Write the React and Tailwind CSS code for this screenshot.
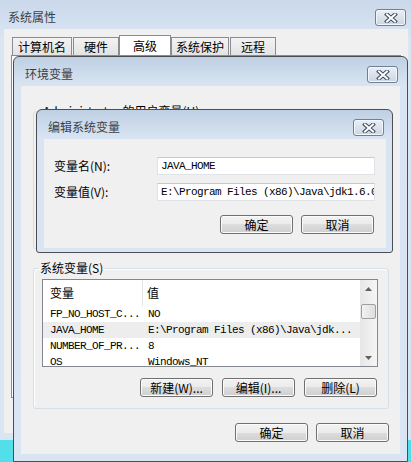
import React from "react";

const cjk = "font-['Noto_Sans_CJK_SC',sans-serif]";
const mono = "font-['Liberation_Mono','Noto_Sans_CJK_SC',monospace] text-[11px] tracking-[-0.6px]";

const CloseBtn = () => (
    <div className="mr-[2px] mt-[9px] flex h-[17px] w-[31px] items-center justify-center self-start rounded-[3px] border border-[#6e7f96] bg-[linear-gradient(#e9eff6,#cbd6e3)] shadow-[inset_0_0_0_1px_#f3f6fa]">
        <svg width="14" height="10" viewBox="0 0 14 10">
            <path d="M3 1.5 L11 8.5 M11 1.5 L3 8.5" stroke="#3d4b5e" strokeWidth="4" strokeLinecap="square" />
            <path d="M3 1.5 L11 8.5 M11 1.5 L3 8.5" stroke="#ffffff" strokeWidth="2" strokeLinecap="square" />
        </svg>
    </div>
);

const Title = ({ children }) => (
    <span className="mt-[8px] self-start pl-[4px] text-[12px] leading-[18px] text-[#3a3f47]">{children}</span>
);

const Btn = ({ children }) => (
    <div className="flex h-[19px] w-[73px] items-center justify-center rounded-[3px] border border-[#707070] bg-[linear-gradient(#f2f2f2_0%,#ebebeb_50%,#dddddd_50%,#cfcfcf_100%)] text-[12px] leading-none text-black shadow-[inset_0_0_0_1px_#fbfbfb]">
        {children}
    </div>
);

const Input = ({ value }) => (
    <div className={"h-[18px] w-[218px] overflow-hidden whitespace-nowrap border border-[#dfe3e8] border-t-[#c6cad0] bg-white pl-[3px] leading-[16px] text-black " + mono}>
        {value}
    </div>
);

const rows = [
    ["FP_NO_HOST_C...", "NO", false],
    ["JAVA_HOME", "E:\\Program Files (x86)\\Java\\jdk...", true],
    ["NUMBER_OF_PR...", "8", false],
    ["OS", "Windows_NT", false],
];

const Arrow = ({ up }) => (
    <svg width="7" height="4" viewBox="0 0 7 4">
        <path d={up ? "M0 4 L3.5 0 L7 4 Z" : "M0 0 L3.5 4 L7 0 Z"} fill="#606060" />
    </svg>
);

const App = () => {
    return (
        <div className={"relative h-[462px] w-[411px] overflow-hidden bg-[#52dfe9] " + cjk}>
            {/* 系统属性 */}
            <div className="absolute left-0 top-0 flex h-[440px] w-[411px] flex-col bg-[linear-gradient(#c9d8ea,#dbe6f3_40px,#d9e5f2)] pb-[7px] pl-[4px] pr-[3px]">
                <div className="flex h-[29px] justify-between">
                    <Title>系统属性</Title>
                    <CloseBtn />
                </div>
                <div className="flex flex-1 flex-col bg-[#f0f0f0] px-[7px] pt-[6px]">
                    <div className="flex items-end pl-[1px] text-[12px] text-black">
                        <div className="flex h-[18px] w-[60px] items-center justify-center border border-b-0 border-[#898c95] bg-[linear-gradient(#f3f3f3,#e3e3e3)]">计算机名</div>
                        <div className="ml-[1px] flex h-[18px] w-[46px] items-center justify-center border border-b-0 border-[#898c95] bg-[linear-gradient(#f3f3f3,#e3e3e3)]">硬件</div>
                        <div className="flex h-[20px] w-[52px] items-center justify-center border border-b-0 border-[#898c95] bg-white">高级</div>
                        <div className="flex h-[18px] w-[58px] items-center justify-center border border-b-0 border-[#898c95] bg-[linear-gradient(#f3f3f3,#e3e3e3)]">系统保护</div>
                        <div className="ml-[1px] flex h-[18px] w-[46px] items-center justify-center border border-b-0 border-[#898c95] bg-[linear-gradient(#f3f3f3,#e3e3e3)]">远程</div>
                    </div>
                    <div className="h-[343px] border border-[#898c95] bg-white" />
                </div>
            </div>

            {/* 环境变量 */}
            <div className="absolute left-[13px] top-[56px] flex h-[406px] w-[395px] flex-col rounded-t-[6px] border border-[#4a4d52] bg-[linear-gradient(#bfd0e4,#d8e4f2_28px,#d9e5f2)] pb-[7px] pl-[7px] pr-[7px]">
                <div className="flex h-[29px] justify-between">
                    <Title>环境变量</Title>
                    <CloseBtn />
                </div>
                <div className="flex flex-1 flex-col bg-[#f0f0f0] text-[12px] text-black">
                    <fieldset className="ml-[12px] mt-[18px] h-[145px] w-[356px] rounded-[3px] border border-[#d5dfe5]">
                        <legend className="ml-[8px] px-[1px] leading-[14px]">Administrator 的用户变量(U)</legend>
                    </fieldset>
                    <fieldset className="ml-[12px] mt-[12px] h-[148px] w-[356px] rounded-[3px] border border-[#d5dfe5] shadow-[inset_1px_1px_0_#fff]">
                        <legend className="ml-[5px] px-[1px] leading-[14px]">系统变量(S)</legend>
                        <div className="ml-[8px] mt-[4px] flex h-[88px] w-[336px] border border-[#828790] bg-white">
                            <div className="w-[317px] overflow-hidden">
                                <div className="flex h-[26px] items-center">
                                    <div className="flex h-full w-[100px] items-center border-r border-[#e3e5e8] pl-[7px]">变量</div>
                                    <div className="pl-[4px]">值</div>
                                </div>
                                {rows.map(([k, v, sel]) => (
                                    <div key={k} className={"flex h-[16px] items-center whitespace-nowrap text-black " + mono + (sel ? " bg-[#ededed]" : "")}>
                                        <div className="w-[100px] pl-[7px]">{k}</div>
                                        <div className="pl-[5px]">{v}</div>
                                    </div>
                                ))}
                            </div>
                            <div className="flex w-[17px] flex-col items-center bg-[linear-gradient(90deg,#e6e6e6,#f6f6f6)]">
                                <div className="flex h-[17px] w-full items-center justify-center"><Arrow up /></div>
                                <div className="mt-[7px] h-[15px] w-[15px] rounded-[2px] border border-[#a0a0a0] bg-[linear-gradient(90deg,#f2f2f2,#dedede)]" />
                                <div className="flex-1" />
                                <div className="flex h-[17px] w-full items-center justify-center"><Arrow /></div>
                            </div>
                        </div>
                        <div className="mt-[11px] flex justify-end gap-[9px] pr-[11px]">
                            <Btn>新建(W)...</Btn>
                            <Btn>编辑(I)...</Btn>
                            <Btn>删除(L)</Btn>
                        </div>
                    </fieldset>
                    <div className="mr-[11px] mt-[14px] flex justify-end gap-[8px]">
                        <Btn>确定</Btn>
                        <Btn>取消</Btn>
                    </div>
                </div>
            </div>

            {/* 编辑系统变量 */}
            <div className="absolute left-[36px] top-[109px] flex h-[144px] w-[357px] flex-col rounded-t-[6px] rounded-b-[3px] border border-[#4a4d52] bg-[linear-gradient(#bfd0e4,#d8e4f2_28px,#d9e5f2)] pb-[4px] pl-[7px] pr-[6px]">
                <div className="flex h-[29px] justify-between">
                    <Title>编辑系统变量</Title>
                    <CloseBtn />
                </div>
                <div className="flex flex-1 flex-col bg-[#f0f0f0] pt-[18px] text-[12px] text-black">
                    <div className="flex items-center">
                        <div className="w-[113px] pl-[10px]">变量名(N):</div>
                        <Input value="JAVA_HOME" />
                    </div>
                    <div className="mt-[8px] flex items-center">
                        <div className="w-[113px] pl-[10px]">变量值(V):</div>
                        <Input value="E:\Program Files (x86)\Java\jdk1.6.0_45" />
                    </div>
                    <div className="mt-[14px] flex justify-end gap-[8px] pr-[12px]">
                        <Btn>确定</Btn>
                        <Btn>取消</Btn>
                    </div>
                </div>
            </div>
        </div>
    );
};

export default App;
